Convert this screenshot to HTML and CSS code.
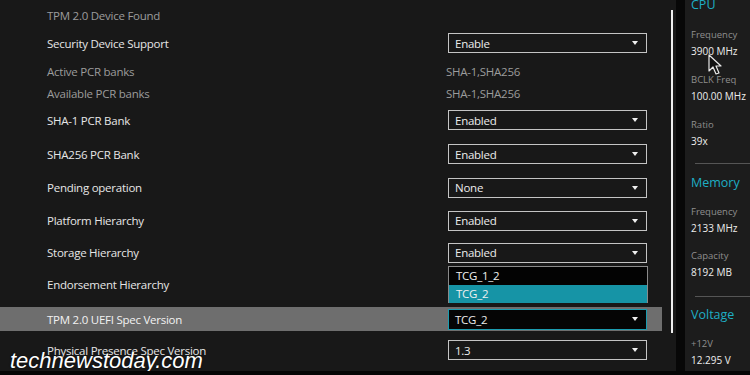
FILE: index.html
```html
<!DOCTYPE html>
<html>
<head>
<meta charset="utf-8">
<link rel="stylesheet" href="styles.css">
</head>
<body>
<div class="screen">
  <div class="main">
    <div class="rows">
      <div class="row h24 first"><span class="label dim">TPM 2.0 Device Found</span></div>
      <div class="row h32"><span class="label">Security Device Support</span><div class="select"><span>Enable</span><i class="arrow"></i></div></div>
      <div class="row h24"><span class="label dim">Active PCR banks</span><span class="value">SHA-1,SHA256</span></div>
      <div class="row h20"><span class="label dim">Available PCR banks</span><span class="value">SHA-1,SHA256</span></div>
      <div class="row h34"><span class="label">SHA-1 PCR Bank</span><div class="select"><span>Enabled</span><i class="arrow"></i></div></div>
      <div class="row h34"><span class="label">SHA256 PCR Bank</span><div class="select"><span>Enabled</span><i class="arrow"></i></div></div>
      <div class="row h33"><span class="label">Pending operation</span><div class="select"><span>None</span><i class="arrow"></i></div></div>
      <div class="row h33"><span class="label">Platform Hierarchy</span><div class="select"><span>Enabled</span><i class="arrow"></i></div></div>
      <div class="row h31"><span class="label">Storage Hierarchy</span><div class="select"><span>Enabled</span><i class="arrow"></i></div></div>
      <div class="row h32"><span class="label">Endorsement Hierarchy</span></div>
      <div class="row h24 active"><span class="label">TPM 2.0 UEFI Spec Version</span><div class="select focus"><span>TCG_2</span><i class="arrow"></i></div></div>
      <div class="row h38"><span class="label">Physical Presence Spec Version</span><div class="select"><span>1.3</span><i class="arrow"></i></div></div>
    </div>
    <div class="scroll-track"><div class="scrollbar"></div></div>
    <div class="popup">
      <div class="opt">TCG_1_2</div>
      <div class="opt sel">TCG_2</div>
    </div>
  </div>
  <div class="gap"></div>
  <aside class="panel">
    <div class="hdr cpu">CPU</div>
    <div class="stat s15"><div class="k">Frequency</div><div class="v">3900 MHz</div></div>
    <div class="stat s15"><div class="k">BCLK Freq</div><div class="v">100.00 MHz</div></div>
    <div class="stat s15"><div class="k">Ratio</div><div class="v">39x</div></div>
    <div class="sep s15"></div>
    <div class="hdr s11">Memory</div>
    <div class="stat s14"><div class="k">Frequency</div><div class="v">2133 MHz</div></div>
    <div class="stat s14"><div class="k">Capacity</div><div class="v">8192 MB</div></div>
    <div class="sep s17"></div>
    <div class="hdr s10">Voltage</div>
    <div class="stat s14"><div class="k">+12V</div><div class="v">12.295 V</div></div>
  </aside>
  <svg class="cursor" width="16" height="22" viewBox="0 0 16 22"><path d="M1 1 L1 17 L5 13 L8 20 L11 19 L8 12 L13 12 Z" fill="#111" stroke="#e8e8e8" stroke-width="1.2" stroke-linejoin="round"/></svg>
  <div class="watermark">technewstoday.com</div>
</div>
<div class="bottom-bar"></div>
</body>
</html>
```
FILE: styles.css
```css
html, body { margin: 0; padding: 0; background: #0a0a0a; }
body { width: 750px; height: 375px; overflow: hidden; font-family: "Open Sans", "DejaVu Sans", sans-serif; }
.screen { position: relative; display: flex; height: 371px; overflow: hidden; }
.main { position: relative; width: 676px; display: flex; background: #181818; }
.rows { width: 662px; display: flex; flex-direction: column; padding-top: 3px; }
.row { display: flex; align-items: center; font-size: 11.5px; letter-spacing: -0.25px; color: #e6e6e6; }
.h20 { height: 20px; } .h24 { height: 24px; } .h31 { height: 31px; } .h32 { height: 32px; }
.h33 { height: 33px; } .h34 { height: 34px; } .h38 { height: 38px; }
.label { width: 448px; box-sizing: border-box; padding-left: 47px; flex: none; }
.dim { color: #9c9c9c; }
.value { margin-left: -2px; color: #9c9c9c; }
.select { width: 199px; height: 20px; box-sizing: border-box; border: 1px solid #c4c4c4; display: flex; align-items: center; justify-content: space-between; padding: 0 8px 0 6px; color: #ececec; }
.arrow { width: 0; height: 0; border-left: 3.5px solid transparent; border-right: 3.5px solid transparent; border-top: 4px solid #f0f0f0; }
.active { background: #6e6e6e; color: #f2f2f2; margin-top: 7px; }
.select.focus { background: #050505; border: 1px solid #1b9cb0; height: 21px; }
.scroll-track { width: 14px; display: flex; justify-content: flex-start; padding-left: 9px; box-sizing: border-box; }
.scrollbar { width: 2px; height: 323px; margin-top: 10px; background: #eeeeee; }
.gap { width: 9px; background: #070707; flex: none; }
.panel { width: 65px; flex: none; background: #1c1c1c; padding-left: 6px; box-sizing: border-box; font-size: 9.5px; }
.hdr { color: #1eaec4; font-size: 12.5px; line-height: 16px; height: 16px; }
.cpu { margin-top: -3px; }
.stat .k { color: #8e8e8e; line-height: 14px; height: 14px; }
.stat .v { color: #ececec; font-size: 10px; line-height: 14px; height: 14px; margin-top: 2px; }
.s10 { margin-top: 10px; } .s11 { margin-top: 11px; } .s14 { margin-top: 14px; } .s15 { margin-top: 15px; } .s17 { margin-top: 17px; }
.sep { height: 1px; background: #555; margin-left: 4px; }
.popup { position: absolute; left: 448px; top: 266px; width: 200px; height: 37px; box-sizing: border-box; border: 1px solid #8a8a8a; background: #030303; }
.opt { height: 18px; line-height: 18px; padding-left: 7px; font-size: 11.5px; letter-spacing: -0.25px; color: #f0f0f0; }
.opt.sel { background: #1694a6; }
.cursor { position: absolute; left: 708px; top: 54px; }
.watermark { position: absolute; left: 10px; top: 348px; font-family: "Liberation Sans", sans-serif; font-style: italic; font-size: 22px; line-height: 26px; color: #ffffff; text-shadow: 0 0 2px rgba(0,0,0,0.8); }
.bottom-bar { height: 4px; background: #050505; }
```
